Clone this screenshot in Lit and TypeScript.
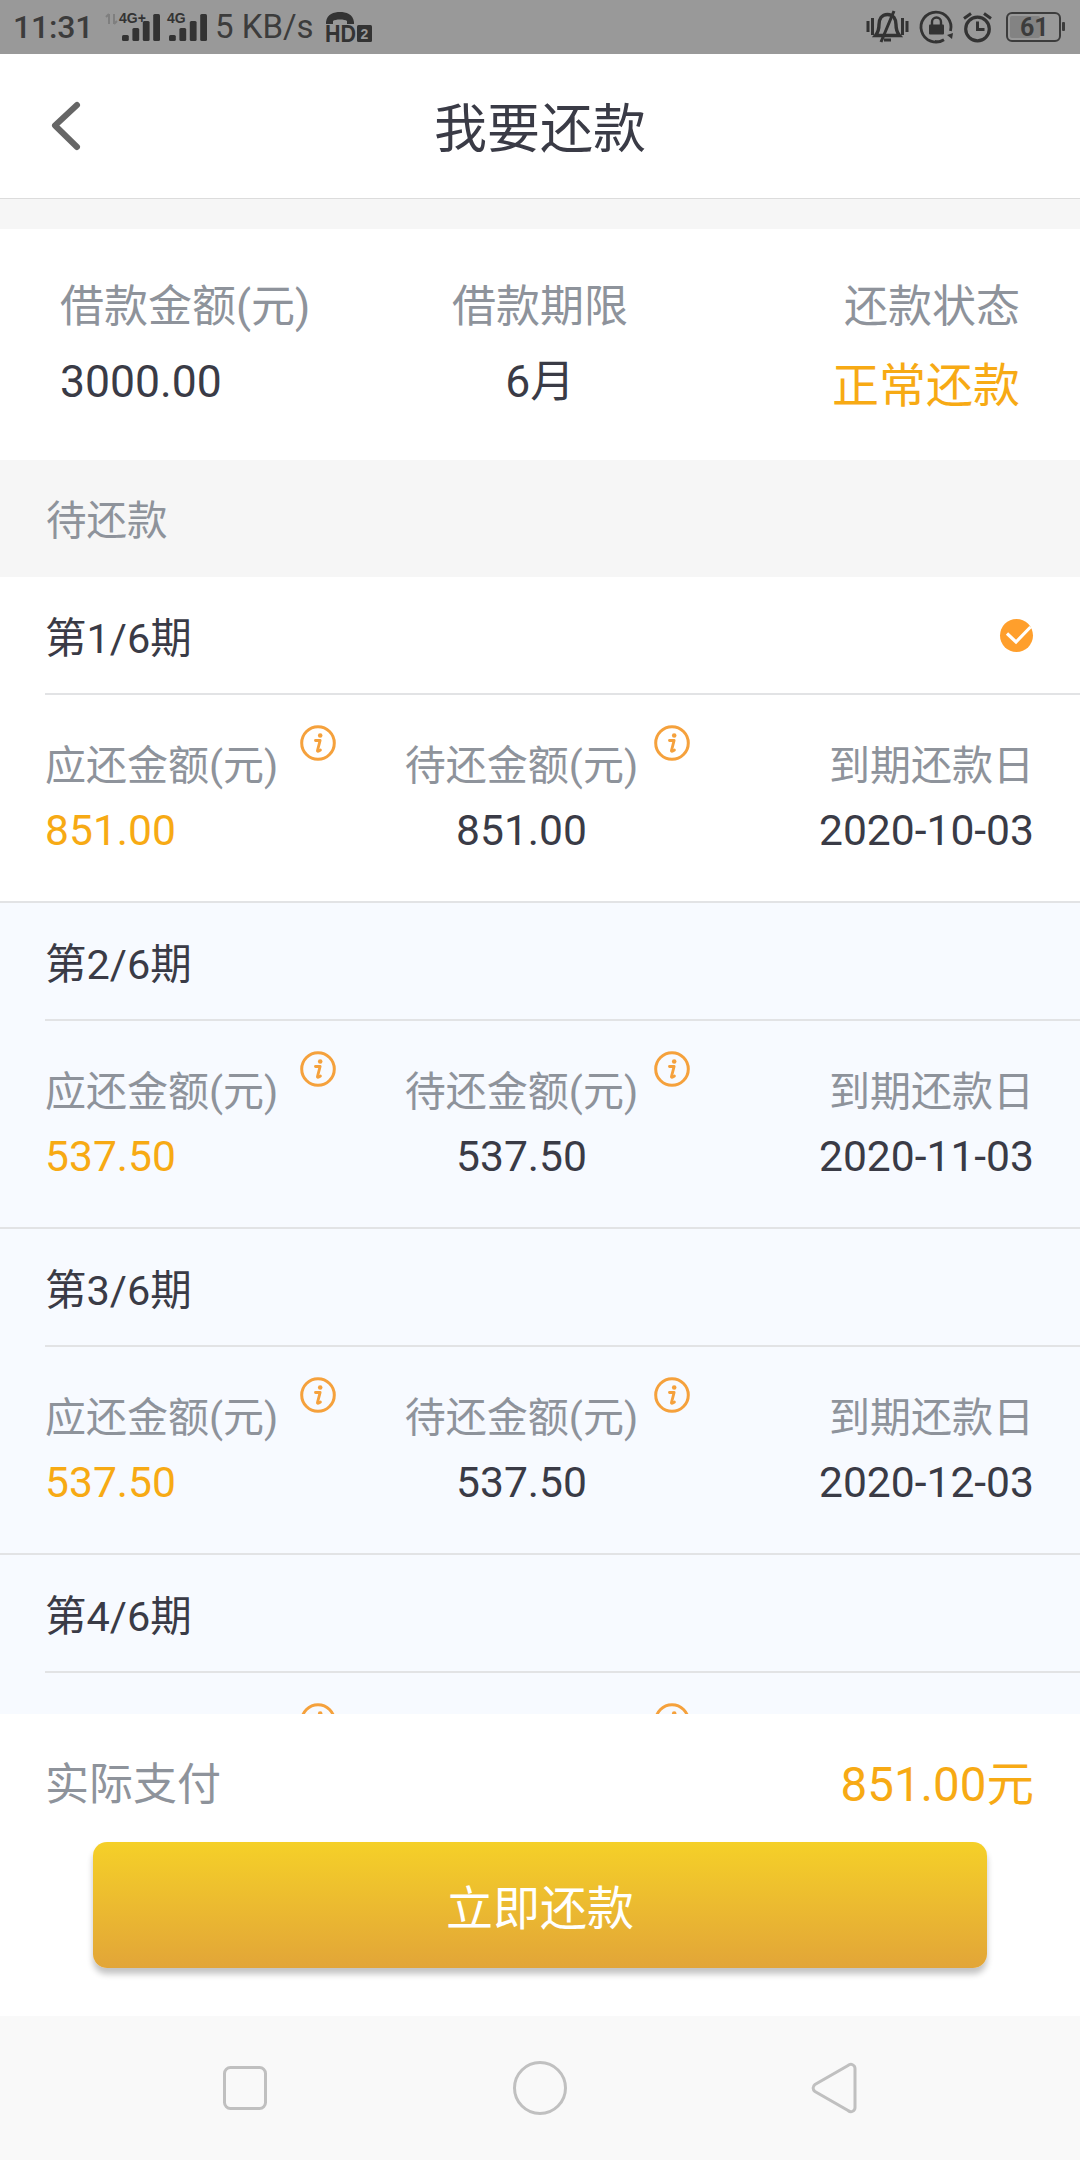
import { LitElement, html, css, svg } from "lit";
import { customElement } from "lit/decorators.js";

interface Period { no: number; due: string; pending: string; date: string; checked?: boolean; clipped?: boolean }

const PERIODS: Period[] = [
  { no: 1, due: "851.00", pending: "851.00", date: "2020-10-03", checked: true },
  { no: 2, due: "537.50", pending: "537.50", date: "2020-11-03" },
  { no: 3, due: "537.50", pending: "537.50", date: "2020-12-03" },
  { no: 4, due: "", pending: "", date: "", clipped: true },
];

const infoIcon = html`<svg class="info" viewBox="0 0 36 36" width="36" height="36">
  <circle cx="18" cy="18" r="16.3" fill="none" stroke="#f5a13c" stroke-width="3"></circle>
  <circle cx="20.2" cy="10.5" r="2.3" fill="#f5a13c"></circle>
  <path d="M15.5 15.5h4.6l-2.6 10c-.2.9.6 1.2 2.900-.4" fill="none" stroke="#f5a13c" stroke-width="2.9" stroke-linejoin="round" stroke-linecap="round"></path>
</svg>`;

const checkIcon = html`<svg class="check" viewBox="0 0 33 33" width="33" height="33">
  <circle cx="16.5" cy="16.5" r="16.5" fill="#ff9f2c"></circle>
  <path d="M7 14.5l9 8.5L30.5 8" fill="none" stroke="#fff" stroke-width="3.2"></path>
</svg>`;

function bars(x0: number) {
  const h = [6, 13, 20, 27];
  return h.map((v, i) => svg`<rect x=${x0 + i * 10.4} y=${28 - v} width="6.8" height=${v} rx="1.5" fill="#333"></rect>`);
}

@customElement("app-root")
export class AppRoot extends LitElement {
  static styles = css`
    :host {
      display: flex;
      flex-direction: column;
      width: 1080px;
      height: 2160px;
      overflow: hidden;
      background: #f6f6f6;
      font-family: Roboto, "Noto Sans CJK SC", sans-serif;
      color: #3a3b46;
    }
    svg { display: block; flex: none; overflow: visible; }

    .status {
      flex: none;
      height: 54px;
      background: #999999;
      display: flex;
      align-items: center;
      padding: 0 15px 0 13px;
      box-sizing: border-box;
      color: #3c3c3c;
    }
    .time { font-size: 32px; line-height: 54px; width: 92px; font-weight: 500; letter-spacing: -0.2px; }
    .speed { font-size: 33px; line-height: 54px; width: 101px; margin: 0 9px 0 11px; white-space: nowrap; font-weight: 400; }
    .sig2 { margin-left: 8px; }
    .status-right { margin-left: auto; display: flex; align-items: center; }
    .m12 { margin-left: 12px; }
    .m10 { margin-left: 10px; }
    .m14 { margin-left: 14px; }
    .tiny { font: 700 14px "Liberation Sans", sans-serif; fill: #333; }
    .hd { font: 700 23px "Liberation Sans", sans-serif; fill: #333; }
    .hd2 { font: 700 14px "Liberation Sans", sans-serif; fill: #999; }
    .batt { font: 700 25px "Roboto", sans-serif; fill: #3c3c3c; }

    .header {
      flex: none;
      height: 145px;
      box-sizing: border-box;
      background: #fff;
      display: flex;
      align-items: center;
      justify-content: center;
      position: relative;
      border-bottom: 1px solid #dcdcdc;
      font-size: 53px;
      padding-bottom: 2px;
    }
    .back { position: absolute; left: 48px; top: 46px; }

    .gap { flex: none; height: 30px; }

    .summary {
      flex: none;
      background: #fff;
      display: grid;
      grid-template-columns: 1fr 1fr 1fr;
      padding: 48px 60px;
      height: 231px;
      box-sizing: border-box;
    }
    .summary .col { display: flex; flex-direction: column; gap: 15px; }
    .c { text-align: center; }
    .r { text-align: right; }
    .s-label { font-size: 44px; line-height: 60px; color: #8e939b; white-space: nowrap; }
    .s-value { font-size: 44.500px; line-height: 60px; white-space: nowrap; }
    .s-status { font-size: 47px; line-height: 60px; color: #f7aa14; white-space: nowrap; padding-top: 4px; }

    .section {
      flex: none;
      height: 117px;
      box-sizing: border-box;
      padding: 6px 0 0 46px;
      font-size: 40.500px;
      line-height: 111px;
      color: #8e939b;
    }

    .list { flex: 1; min-height: 0; overflow: hidden; }
    .period {
      height: 326px;
      box-sizing: border-box;
      background: #f7faff;
      border-bottom: 2px solid #e2e3e5;
    }
    .period.first { background: #fff; }
    .p-title {
      height: 118px;
      box-sizing: border-box;
      margin-left: 45px;
      padding: 0 47px 0 0;
      border-bottom: 2px solid #e2e3e5;
      display: flex;
      align-items: center;
      justify-content: space-between;
      font-size: 41.500px;
    }
    .p-body {
      display: grid;
      grid-template-columns: 315px 323px 1fr;
      padding: 43px 46px 0 45px;
      row-gap: 8px;
    }
    .p-label { font-size: 41px; line-height: 56px; min-height: 56px; color: #8e939b; white-space: nowrap; position: relative; }
    .p-value { font-size: 42.600px; line-height: 56px; white-space: nowrap; }
    .orange { color: #f7aa14; }
    .info { position: absolute; top: -13px; }
    .info-a .info { left: 255px; }
    .info-b .info { left: 294px; }

    .footer {
      flex: none;
      height: 302px;
      background: #fff;
      padding-top: 41px;
      box-sizing: border-box;
    }
    .pay {
      display: flex;
      justify-content: space-between;
      padding: 0 46px 0 45px;
      line-height: 60px;
      font-size: 44px;
      color: #8e939b;
    }
    .pay .amt { font-size: 47.500px; color: #f7aa14; }
    .btn {
      margin: 27px 93px 0;
      height: 126px;
      border-radius: 14px;
      background: linear-gradient(180deg, #f5d028 0%, #e2a538 100%);
      box-shadow: 0 6px 6px rgba(0, 0, 0, 0.24);
      color: #fff;
      font-size: 47px;
      display: flex;
      align-items: center;
      justify-content: center;
      padding-bottom: 2px;
      box-sizing: content-box;
      height: 124px;
    }

    .nav {
      flex: none;
      height: 144px;
      background: #f9f9f9;
      display: flex;
      align-items: center;
      justify-content: center;
    }
    .nav-sq { margin-right: 246px; }
    .nav-tri { margin-left: 244px; }
  `;

  private statusBar() {
    return html`<div class="status">
      <span class="time">11:31</span>
      <svg width="54" height="30" viewBox="0 0 54 30">
        <path d="M4 2v10M1 5l3-3M9 12V2M12 9l-3 3" fill="none" stroke="#7f7f7f" stroke-width="2"></path>
        <text class="tiny" x="14" y="11">4G+</text>
        <g transform="translate(17,1)">${bars(0)}</g>
      </svg>
      <svg class="sig2" width="37" height="30" viewBox="0 0 37 30">
        <text class="tiny" x="0" y="11">4G</text>
        <g transform="translate(2,1)">${bars(0)}</g>
      </svg>
      <span class="speed">5 KB/s</span>
      <svg width="47" height="32" viewBox="0 0 47 32">
        <path d="M1 11C2 3 9 1 15 1s13 2 14 10v2h-7V10c-2-2-12-2-14 0v3H1z" fill="#333"></path>
        <text class="hd" x="0" y="31" textLength="31" lengthAdjust="spacingAndGlyphs">HD</text>
        <rect x="32" y="14" width="15" height="17" rx="1.5" fill="#333"></rect>
        <text class="hd2" x="35.500" y="27.500">2</text>
      </svg>
      <div class="status-right">
        <svg width="41" height="34" viewBox="0 0 41 34">
          <path d="M1 11v11M5.500 8v17M35.500 8v17M40 11v11" fill="none" stroke="#333" stroke-width="3"></path>
          <path d="M20.500 4.500c-6 0-8.500 5-8.500 10 0 5-1 8-3.500 11h24c-2.500-3-3.500-6-3.500-11 0-5-2.500-10-8.500-10z" fill="none" stroke="#333" stroke-width="3.400"></path>
          <path d="M27 1L14 32M17 30h7" fill="none" stroke="#333" stroke-width="3"></path>
        </svg>
        <svg class="m12" width="33" height="32" viewBox="0 0 33 32">
          <path d="M30.500 20A15 15 0 1 0 24 28.800M15 30.500A15 15 0 0 0 22 30" fill="none" stroke="#333" stroke-width="2.800"></path>
          <path d="M27 24l6-2-1 6z" fill="#333"></path>
          <rect x="9" y="13.500" width="15" height="10" rx="1" fill="#333"></rect>
          <path d="M12 14v-3a4.500 4.500 0 0 1 9 0v3" fill="none" stroke="#333" stroke-width="2.400"></path>
        </svg>
        <svg class="m10" width="29" height="32" viewBox="0 0 29 32">
          <circle cx="14.500" cy="18" r="11.800" fill="none" stroke="#333" stroke-width="3.200"></circle>
          <path d="M14.500 10.500v8h7" fill="none" stroke="#333" stroke-width="3"></path>
          <path d="M1 7.500L8 2.500M28 7.500L21 2.500" fill="none" stroke="#333" stroke-width="3"></path>
        </svg>
        <svg class="m14" width="59" height="30" viewBox="0 0 59 30">
          <rect x="1" y="1" width="53" height="28" rx="5" fill="none" stroke="#3c3c3c" stroke-width="2"></rect>
          <rect x="4" y="4" width="30" height="22" rx="2" fill="#838383"></rect>
          <rect x="56" y="10" width="3" height="9" rx="1" fill="#3c3c3c"></rect>
          <text class="batt" x="14" y="24">61</text>
        </svg>
      </div>
    </div>`;
  }

  private period(p: Period) {
    return html`<div class="period ${p.checked ? "first" : ""}">
      <div class="p-title"><span>第${p.no}/6期</span>${p.checked ? checkIcon : ""}</div>
      <div class="p-body">
        ${p.clipped
          ? html`<div class="p-label info-a">${infoIcon}</div><div class="p-label info-b">${infoIcon}</div>`
          : html`
              <div class="p-label info-a">应还金额(元)${infoIcon}</div>
              <div class="p-label info-b c">待还金额(元)${infoIcon}</div>
              <div class="p-label r">到期还款日</div>
              <div class="p-value orange">${p.due}</div>
              <div class="p-value c">${p.pending}</div>
              <div class="p-value r">${p.date}</div>
            `}
      </div>
    </div>`;
  }

  render() {
    return html`
      ${this.statusBar()}
      <div class="header">
        <svg class="back" width="34" height="52" viewBox="0 0 34 52">
          <path d="M29 5L7 25.500L29 47" fill="none" stroke="#666" stroke-width="6" stroke-linecap="round" stroke-linejoin="round"></path>
        </svg>
        我要还款
      </div>
      <div class="gap"></div>
      <div class="summary">
        <div class="col"><div class="s-label">借款金额(元)</div><div class="s-value">3000.00</div></div>
        <div class="col c"><div class="s-label">借款期限</div><div class="s-value">6月</div></div>
        <div class="col r"><div class="s-label">还款状态</div><div class="s-status">正常还款</div></div>
      </div>
      <div class="section">待还款</div>
      <div class="list">${PERIODS.map((p) => this.period(p))}</div>
      <div class="footer">
        <div class="pay"><span>实际支付</span><span class="amt">851.00元</span></div>
        <div class="btn">立即还款</div>
      </div>
      <div class="nav">
        <svg class="nav-sq" width="44" height="44" viewBox="0 0 44 44">
          <rect x="1.500" y="1.500" width="41" height="41" rx="6" fill="none" stroke="#c0c0c0" stroke-width="3"></rect>
        </svg>
        <svg width="54" height="54" viewBox="0 0 54 54">
          <circle cx="27" cy="27" r="25.500" fill="none" stroke="#c0c0c0" stroke-width="3"></circle>
        </svg>
        <svg class="nav-tri" width="46" height="52" viewBox="0 0 46 52">
          <path d="M37 3.500c3-2.500 7-.5 7 3v39c0 3.500-4 5.500-7 3L4 29.500c-2.500-2-2.500-5 0-7z" fill="none" stroke="#c0c0c0" stroke-width="3"></path>
        </svg>
      </div>
    `;
  }
}
